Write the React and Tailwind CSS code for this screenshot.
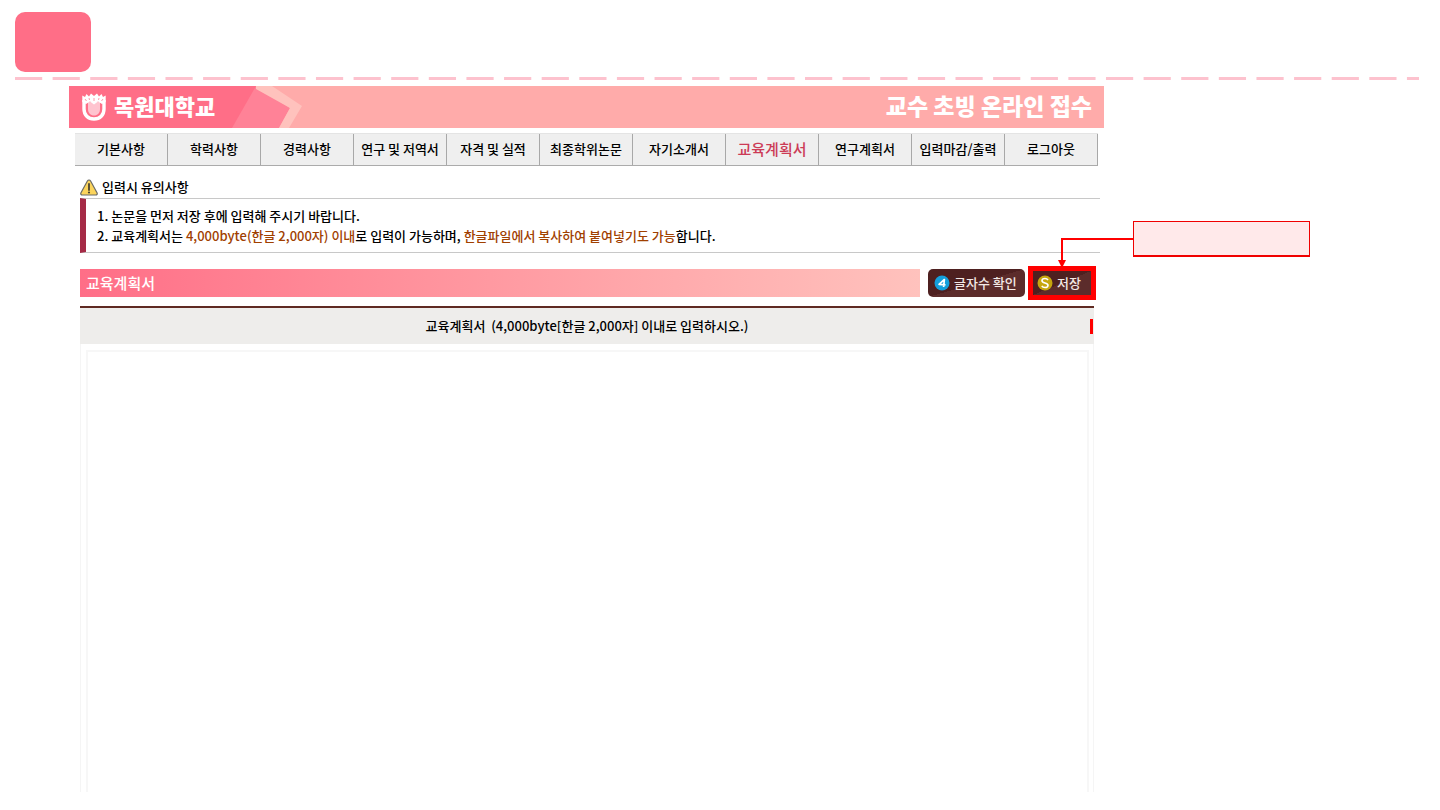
import React, { useState } from "react";

const menus = [
  "기본사항",
  "학력사항",
  "경력사항",
  "연구 및 저역서",
  "자격 및 실적",
  "최종학위논문",
  "자기소개서",
  "교육계획서",
  "연구계획서",
  "입력마감/출력",
  "로그아웃",
];

function DashedLine() {
  return (
    <svg className="mt-[5px] block h-[3px] w-full" aria-hidden="true">
      <line x1="0" y1="1.5" x2="100%" y2="1.5" stroke="#fdc2ce" strokeWidth="3" strokeDasharray="27.2 10.42" />
    </svg>
  );
}

// Tulip emblem of the university
function Emblem() {
  return (
    <svg className="h-7 w-6 shrink-0" viewBox="0 0 24 28" aria-hidden="true">
      <path d="M2 7 V16 C2 22 6 26 12 26 C18 26 22 22 22 16 V7" fill="none" stroke="#fff" strokeWidth="3.4" />
      <path d="M6 9 H18 V16 C18 20 15.500 22.500 12 22.500 C8.500 22.500 6 20 6 16 Z" fill="#ffc4cf" />
      <path
        d="M0.300 2.500 L3 4 L4.500 1 L7 3.500 L9 0.500 L12 3 L15 0.500 L17 3.500 L19.500 1 L21 4 L23.700 2.500 V9 L20 11 L16 8.500 L12 11.500 L8 8.500 L4 11 L0.300 9 Z"
        fill="#fff"
      />
      <path d="M3 6 L4.500 8 M7 5 L7.500 7 M12 5 V8 M17 5 L16.500 7 M21 6 L19.500 8" stroke="#ff9aac" strokeWidth="1" />
    </svg>
  );
}

function Banner() {
  return (
    <header className="relative flex h-[42px] items-center justify-between bg-[#ffabaa] pr-3 pb-1 pl-[13px]">
      <svg className="absolute top-0 left-0 h-full w-[240px]" viewBox="0 0 240 42" aria-hidden="true">
        <path d="M0 0 H187 L221 22 L210 42 H0 Z" fill="#ff8297" />
        <path d="M0 0 H187 L163 42 H0 Z" fill="#ff6e87" />
        <path d="M187 0 H203 L233 20 L220 42 H210 L221 22 L187 3 Z" fill="#ffc2bd" />
      </svg>
      <a href="#home" className="relative flex items-center gap-2 text-[22px] leading-7 font-black text-white">
        <span className="pt-1">
          <Emblem />
        </span>
        목원대학교
      </a>
      <h1 className="relative text-[23px] leading-7 font-black text-white">교수 초빙 온라인 접수</h1>
    </header>
  );
}

function WarningIcon() {
  return (
    <svg className="h-[17px] w-[18px]" viewBox="0 0 18 17" aria-hidden="true">
      <path d="M9 1 C9.700 1 10.200 1.300 10.600 2 L17 13.800 C17.600 15 17 16 15.700 16 H2.300 C1 16 0.400 15 1 13.800 L7.400 2 C7.800 1.300 8.300 1 9 1 Z" fill="#fbd45c" stroke="#6b6b66" strokeWidth="1.2" />
      <path d="M9 5 V11" stroke="#4a4330" strokeWidth="1.800" strokeLinecap="round" />
      <circle cx="9" cy="13.500" r="1.100" fill="#4a4330" />
    </svg>
  );
}

function CheckIcon() {
  return (
    <svg className="size-4 shrink-0" viewBox="0 0 16 16" aria-hidden="true">
      <circle cx="8" cy="8" r="7.500" fill="#149fdc" />
      <path d="M9.600 12 L10.400 4.500 L5 9.300 L11.500 9.900" fill="none" stroke="#fff" strokeWidth="1.700" strokeLinejoin="round" />
    </svg>
  );
}

function SaveIcon() {
  return (
    <svg className="size-4 shrink-0" viewBox="0 0 16 16" aria-hidden="true">
      <circle cx="8" cy="8" r="7.500" fill="#c6a60e" />
      <path d="M11 5 C10.300 3.900 9.200 3.500 8 3.500 C6.200 3.500 5 4.400 5 5.700 C5 8.500 11 7.300 11 10.200 C11 11.600 9.800 12.500 8 12.500 C6.600 12.500 5.400 12 4.800 10.900" fill="none" stroke="#fff" strokeWidth="1.600" />
    </svg>
  );
}

// Red guide: empty note box and the arrow pointing at the save button
function Callout() {
  return (
    <div className="pointer-events-none absolute -top-[45px] left-[28px] flex w-[254px] items-start">
      <svg className="mt-4 h-[31px] w-[77px] shrink-0" viewBox="0 0 77 31" aria-hidden="true">
        <path d="M77 2 H6 V24" fill="none" stroke="#ff0000" strokeWidth="2" />
        <path d="M2 23 H10 L6 31 Z" fill="#ff0000" />
      </svg>
      <div className="h-9 flex-1 border border-b-2 border-[#f00000] bg-[#ffe9ea]" />
    </div>
  );
}

export default function App() {
  const [text, setText] = useState("");

  return (
    <div className="px-[15px] pt-3 pb-[18px] font-['Noto_Sans_CJK_KR',sans-serif] text-[13px] leading-5 font-medium text-black">
      <div className="h-[60px] w-[76px] rounded-[10px] bg-[#ff6e87]" />
      <div className="pr-1.5">
        <DashedLine />
      </div>

      <div className="mt-1.5 mr-[321px] ml-[54px]">
        <Banner />

        <div className="mr-1.5 ml-1.5">
          <nav className="mt-[5px] grid h-[33px] grid-cols-11 border-t border-b border-t-[#e4e4e4] border-b-[#ababab] bg-[#efefef]">
            {menus.map((menu) => (
              <a
                key={menu}
                href={`#${menu}`}
                className={`flex items-center justify-center border-r border-[#a8a8a8] pb-0.5 whitespace-nowrap ${
                  menu === "교육계획서" ? "text-[15px] text-[#cc3b56]" : ""
                }`}
              >
                {menu}
              </a>
            ))}
          </nav>
        </div>

        <main className="mr-1 ml-[11px]">
          <h2 className="mt-[11px] mb-px flex items-center gap-1">
            <WarningIcon />
            입력시 유의사항
          </h2>
          <ol className="border-t border-b border-l-6 border-t-[#c8c8c8] border-b-[#c8c8c8] border-l-[#a52a46] pt-[7px] pb-1.5 pl-[11px]">
            <li>1. 논문을 먼저 저장 후에 입력해 주시기 바랍니다.</li>
            <li>
              2. 교육계획서는 <span className="text-[#a04000]">4,000byte(한글 2,000자) 이내</span>로 입력이 가능하며,{" "}
              <span className="text-[#a04000]">한글파일에서 복사하여 붙여넣기도 가능</span>합니다.
            </li>
          </ol>

          <section className="mr-1.5">
            <div className="mt-[13px] flex items-center gap-2">
              <h2 className="flex h-7 flex-1 items-center bg-linear-to-r from-[#ff6e87] to-[#ffc2bd] pl-1.5 text-[15px] text-white">
                교육계획서
              </h2>
              <div className="-mr-0.5 flex items-center gap-[3px]">
                <button
                  type="button"
                  className="flex h-7 w-[97px] items-center gap-1 rounded-[5px] bg-linear-to-br from-[#4e2020] from-50% to-[#5c2c2b] to-50% pl-1.5 whitespace-nowrap text-[#f3e9e6]"
                >
                  <CheckIcon />
                  글자수 확인
                </button>
                <div className="relative">
                  <button
                    type="button"
                    className="flex h-[34px] w-[68px] items-center gap-1 border-5 border-[#ff0000] bg-linear-to-br from-[#4e2020] from-50% to-[#5c2c2b] to-50% pl-1 whitespace-nowrap text-[#f3e9e6]"
                  >
                    <SaveIcon />
                    저장
                  </button>
                  <Callout />
                </div>
              </div>
            </div>

            <div className="mt-1.5 border-t-2 border-[#5f2a22]">
              <label
                htmlFor="plan"
                className="relative flex h-9 items-center justify-center bg-[#eeedeb]"
              >
                <span className="whitespace-pre">교육계획서  (4,000byte[한글 2,000자] 이내로 입력하시오.)</span>
                <span className="absolute right-px h-[15px] w-[3px] bg-[#ff0000]" />
              </label>
              <div className="border-r border-l border-[#f5f5f5] pt-1.5 pr-1 pl-[5px]">
                <textarea
                  id="plan"
                  value={text}
                  onChange={(e) => setText(e.target.value)}
                  className="block h-[442px] w-full resize-none border-2 border-b-0 border-[#f7f7f7] p-2 outline-none"
                />
              </div>
            </div>
          </section>
        </main>
      </div>
    </div>
  );
}
